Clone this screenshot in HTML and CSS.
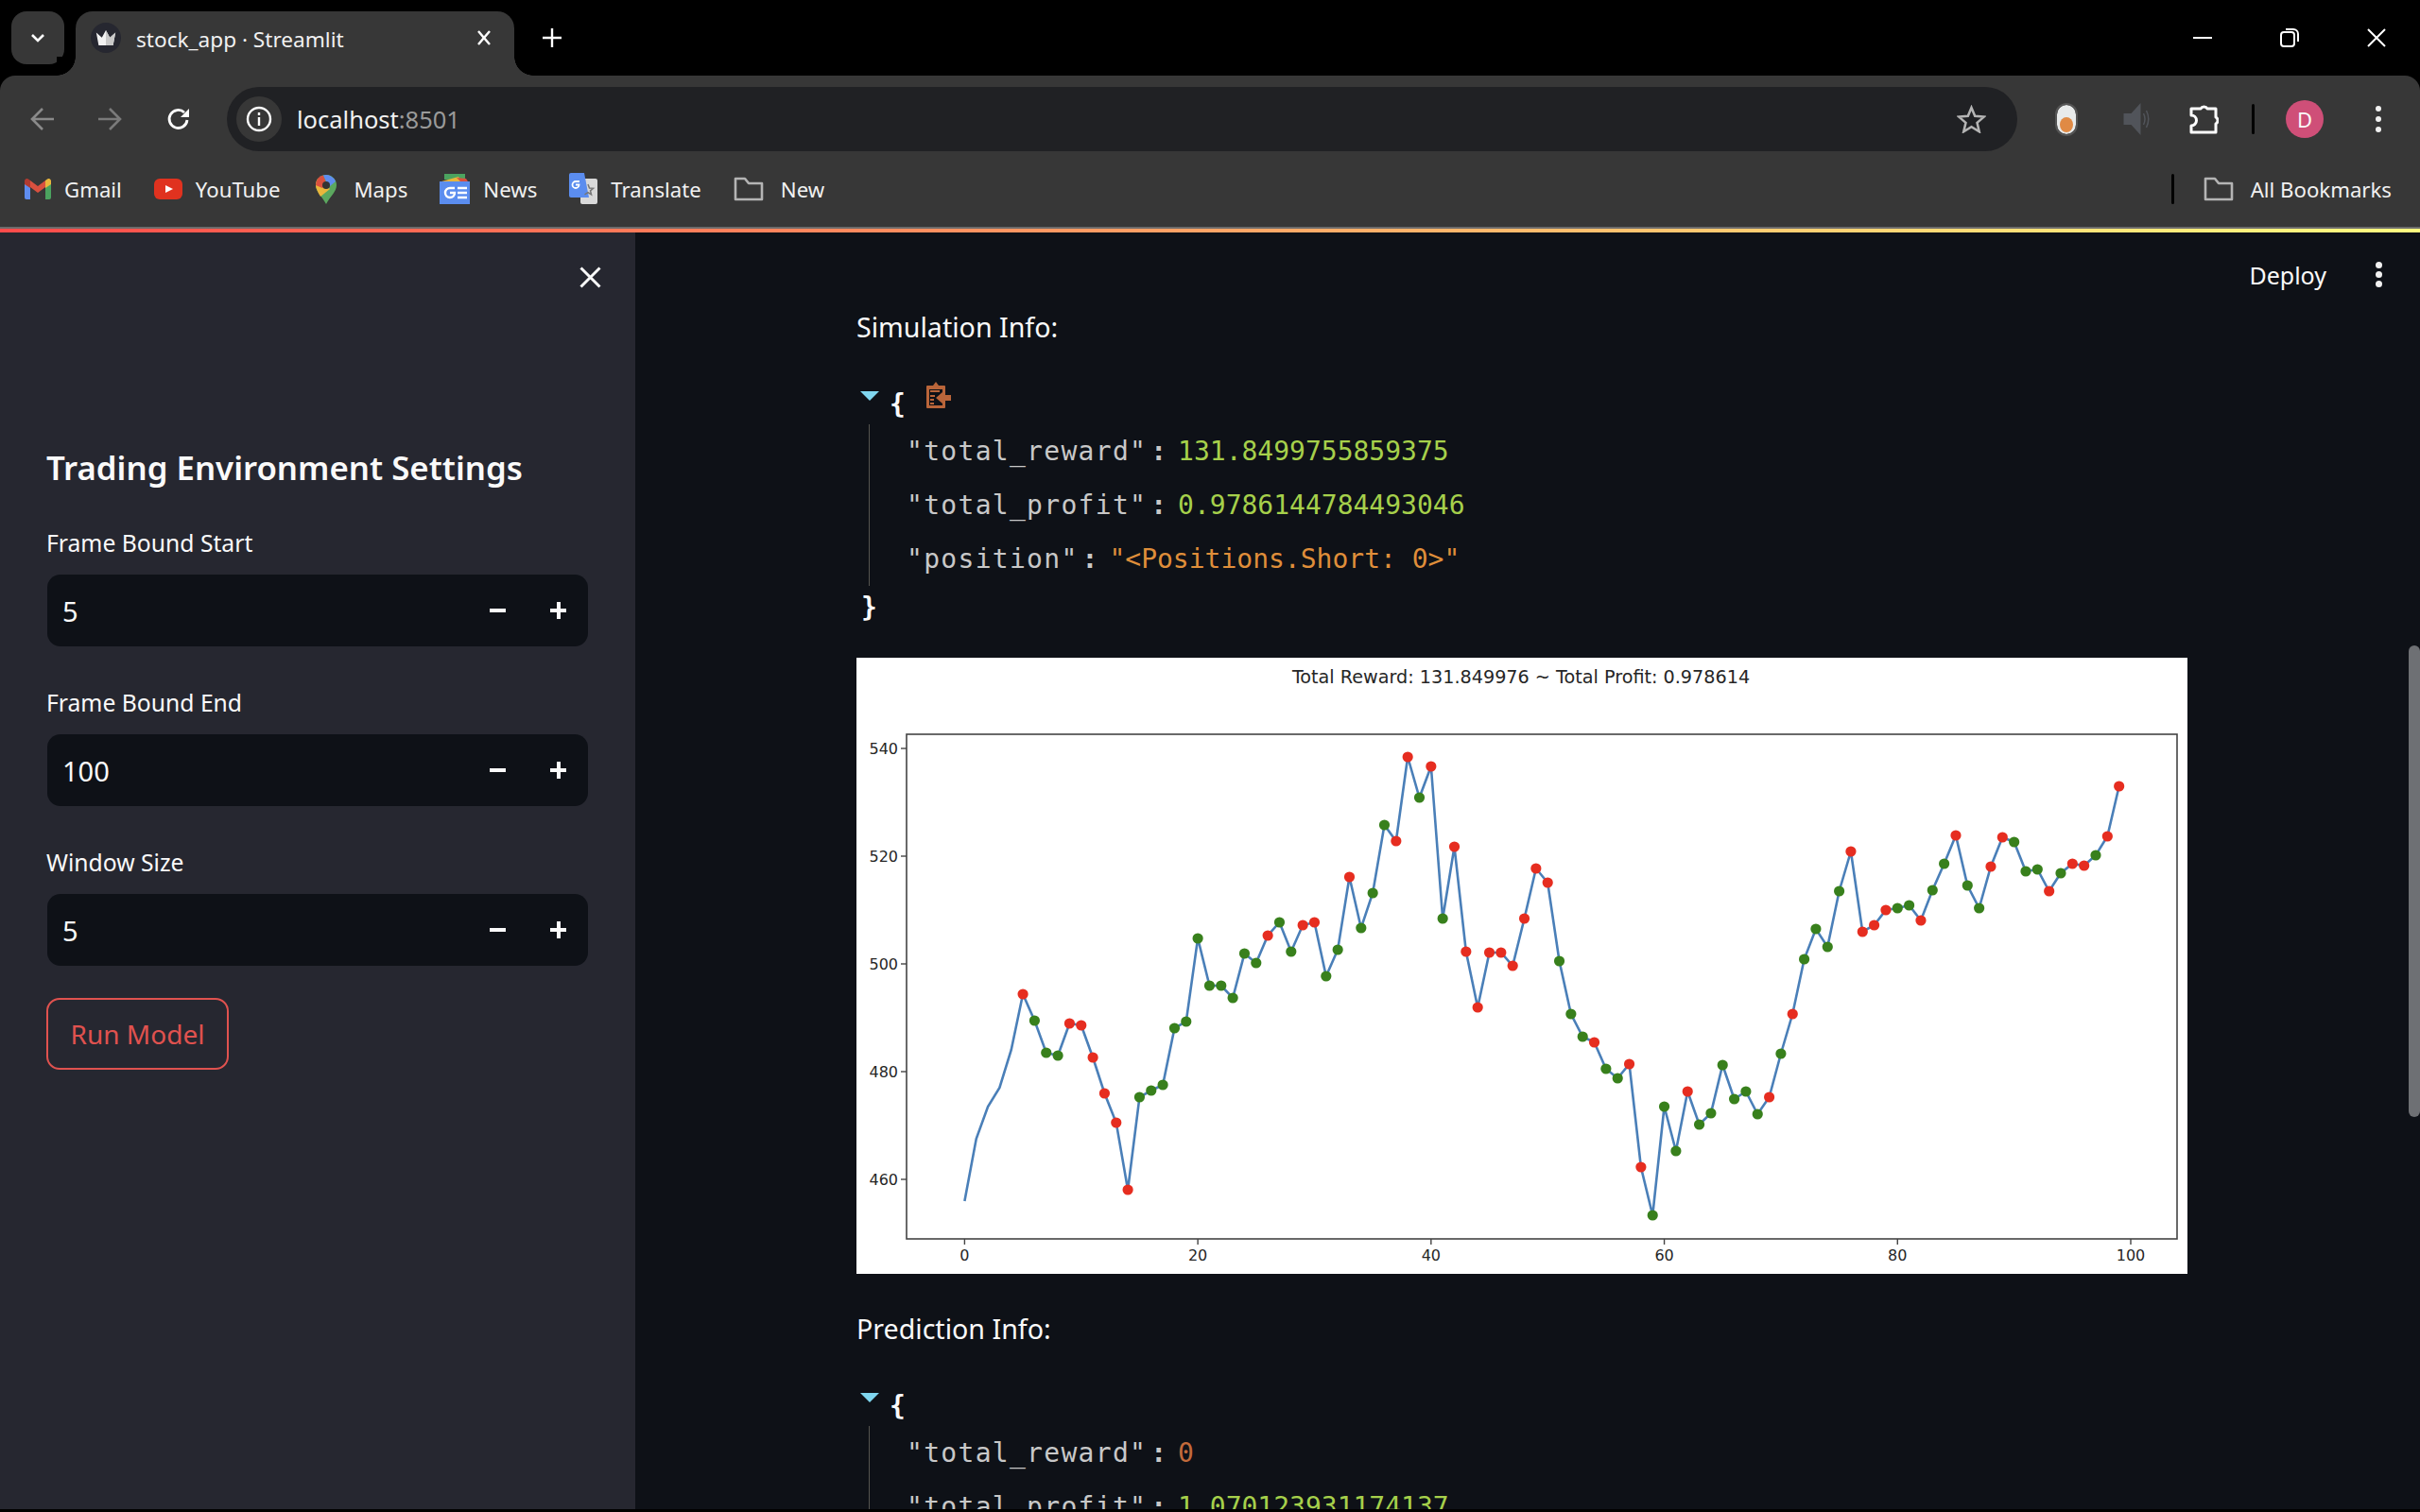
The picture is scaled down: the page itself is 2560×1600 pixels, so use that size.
FILE: index.html
```html
<!DOCTYPE html>
<html lang="en">
<head>
  <meta charset="UTF-8">
  <title>stock_app · Streamlit</title>
  <link rel="stylesheet" href="styles.css">
</head>
<body>
  <div class="browser">
    <div class="tabstrip">
      <div class="tab-menu">
        <svg width="20" height="20" viewBox="0 0 20 20"><path d="M4 7l6 6 6-6" fill="none" stroke="#fff" stroke-width="2.6"/></svg>
      </div>
      <div class="tab">
        <span class="favicon">
          <svg width="22" height="19" viewBox="0 0 26 22"><path d="M1 4l7 6 5-9 5 9 7-6-3 16H4z" fill="#f2f2f2"/><path d="M13 1l5 9 7-6-3 16H13z" fill="#c9c9c9"/></svg>
        </span>
        <span class="tab-title">stock_app · Streamlit</span>
        <svg width="16" height="16" viewBox="0 0 16 16"><path d="M2 1l12 14M14 1L2 15" stroke="#fff" stroke-width="2.4"/></svg>
      </div>
      <svg class="new-tab" width="20" height="20" viewBox="0 0 20 20"><path d="M10 0v20M0 10h20" stroke="#fff" stroke-width="2.4"/></svg>
      <div class="window-btns">
        <svg width="20" height="4" viewBox="0 0 20 4"><path d="M0 2h20" stroke="#fff" stroke-width="2"/></svg>
        <svg width="20" height="20" viewBox="0 0 20 20" fill="none" stroke="#fff" stroke-width="2"><rect x="1" y="4" width="14" height="15" rx="3"/><path d="M6 1h8a5 5 0 0 1 5 5v8"/></svg>
        <svg width="20" height="20" viewBox="0 0 20 20"><path d="M1 1l18 18M19 1L1 19" stroke="#fff" stroke-width="2"/></svg>
      </div>
    </div>

    <div class="toolbar">
      <svg class="nav-icon" width="26" height="24" viewBox="0 0 26 24" fill="none" stroke="#8a8a8a" stroke-width="2.6"><path d="M25 12H3M13 1L2 12l11 11"/></svg>
      <svg class="nav-icon" width="26" height="24" viewBox="0 0 26 24" fill="none" stroke="#7a7a7a" stroke-width="2.6"><path d="M1 12h22M13 1l11 11-11 11"/></svg>
      <svg class="nav-icon" width="26" height="26" viewBox="0 0 26 26" fill="none" stroke="#fff" stroke-width="2.8"><path d="M22 14a9.500 9.500 0 1 1-3-8"/><path d="M24 2v9h-9z" fill="#fff" stroke="none"/></svg>
      <div class="omnibox">
        <span class="site-info">
          <svg width="28" height="28" viewBox="0 0 28 28" fill="none" stroke="#fff" stroke-width="2.4"><circle cx="14" cy="14" r="12"/><path d="M14 12v9M14 7v3"/></svg>
        </span>
        <span class="url">localhost<span class="url-port">:8501</span></span>
        <svg width="31" height="30" viewBox="0 0 32 31"><path d="M16 3l3.800 9.200 9.900.800-7.500 6.500 2.300 9.700-8.500-5.200-8.500 5.200 2.300-9.700-7.500-6.500 9.900-.800z" fill="none" stroke="#b4b4b4" stroke-width="2.600"/></svg>
      </div>
      <span class="ext-toggle"><span class="ext-dot"></span></span>
      <svg class="ext-sound" width="29" height="36" viewBox="0 0 28 36"><path d="M1 12h8L19 1v34L9 24H1z" fill="#51545a"/><path d="M22 12c2 4 2 8 0 12M25 9c3 6 3 12 0 18" fill="none" stroke="#51545a" stroke-width="1.500"/></svg>
      <svg class="ext-puzzle" width="31" height="32" viewBox="0 0 31 32" fill="none" stroke="#fff" stroke-width="3" stroke-linejoin="round"><path d="M2 5h10a4 4 0 0 1 7 0h9v9a4 4 0 0 1 0 7v9H2v-7a5 5 0 0 0 0-11z"/></svg>
      <span class="divider tool-divider"></span>
      <span class="avatar">D</span>
      <span class="kebab"><i></i><i></i><i></i></span>
    </div>

    <div class="bookmarks">
      <a class="bm">
        <svg width="28" height="22" viewBox="0 0 28 22"><path d="M0 4v16a2 2 0 0 0 2 2h4V9z" fill="#5f8def"/><path d="M22 9v13h4a2 2 0 0 0 2-2V4z" fill="#4ba35f"/><path d="M6 9l8 6 8-6V2l-8 6-8-6z" fill="#d9503f"/><path d="M22 2l2-1.500a2.500 2.500 0 0 1 4 2V6l-6 4z" fill="#e9b63c"/><path d="M0 6V2.500a2.500 2.500 0 0 1 4-2l2 1.500v8z" fill="#b03a30"/></svg>
        Gmail
      </a>
      <a class="bm">
        <svg width="30" height="22" viewBox="0 0 30 22"><rect width="30" height="22" rx="6" fill="#e0321f"/><path d="M12 7l8 4-8 4z" fill="#fff"/></svg>
        YouTube
      </a>
      <a class="bm bm-maps">
        <svg width="22" height="31" viewBox="0 0 22 31"><path d="M11 31C7 23 0 18 0 11a11 11 0 0 1 22 0c0 7-7 12-11 20z" fill="#5ba85f"/><path d="M2 4l13 11-10 8C2 18 0 14 0 11q0-4 2-7z" fill="#e9b63c"/><path d="M2.500 3.500A11 11 0 0 1 8 .5L11 8l-4 6-7-3q0-4 2.500-7.500z" fill="#d9503f"/><path d="M8 .5A11 11 0 0 1 21 7l-6 5-4-5z" fill="#5f8def"/><circle cx="11" cy="11" r="4" fill="#333"/></svg>
        Maps
      </a>
      <a class="bm">
        <svg width="32" height="32" viewBox="0 0 32 32"><path d="M5 3V0h22v6H5z" fill="#4ba35f"/><path d="M2 8l18-5 3 5z" fill="#e9b63c"/><path d="M18 4l10 1 2 3H22z" fill="#d9503f"/><rect y="8" width="32" height="24" fill="#5b8def"/><path d="M16 15h-5a5 5 0 1 0 5 5h-5" fill="none" stroke="#fff" stroke-width="2.400"/><path d="M19 15h10M19 20h10M19 25h10" stroke="#fff" stroke-width="2.600"/></svg>
        News
      </a>
      <a class="bm">
        <svg width="30" height="34" viewBox="0 0 30 34"><rect x="12" y="6" width="18" height="27" rx="2" fill="#d9d9d9"/><path d="M2 0h14l5 26H2a2 2 0 0 1-2-2V2a2 2 0 0 1 2-2z" fill="#5b8def"/><path d="M20 12l1.500 4 4 .3-3 2.500 1 4-3.500-2.200-3.500 2.200" fill="none" stroke="#777" stroke-width="1.500"/><path d="M11 9H7a3.500 3.500 0 1 0 3.500 3.500H7" fill="none" stroke="#fff" stroke-width="1.800"/></svg>
        Translate
      </a>
      <a class="bm bm-folder">
        <svg width="32" height="26" viewBox="0 0 32 26"><path d="M2 2h10l4 5h14v17H2z" fill="none" stroke="#b4b4b4" stroke-width="2.600" stroke-linejoin="round"/></svg>
        New
      </a>
      <span class="bm-spacer"></span>
      <span class="divider bm-divider"></span>
      <a class="bm bm-folder">
        <svg width="32" height="26" viewBox="0 0 32 26"><path d="M2 2h10l4 5h14v17H2z" fill="none" stroke="#b4b4b4" stroke-width="2.600" stroke-linejoin="round"/></svg>
        All Bookmarks
      </a>
    </div>
    <div class="rainbow"></div>
  </div>

  <div class="app">
    <aside class="sidebar">
      <div class="sidebar-top">
        <svg width="23" height="23" viewBox="0 0 23 23"><path d="M1.500 1.500l20 20M21.500 1.500l-20 20" stroke="#fafafa" stroke-width="3"/></svg>
      </div>
      <h2 class="sidebar-title">Trading Environment Settings</h2>
      <div class="field">
        <label class="field-label">Frame Bound Start</label>
        <div class="num-input"><span class="num-value">5</span><span class="step minus"></span><span class="step plus"></span></div>
      </div>
      <div class="field">
        <label class="field-label">Frame Bound End</label>
        <div class="num-input"><span class="num-value">100</span><span class="step minus"></span><span class="step plus"></span></div>
      </div>
      <div class="field">
        <label class="field-label">Window Size</label>
        <div class="num-input"><span class="num-value">5</span><span class="step minus"></span><span class="step plus"></span></div>
      </div>
      <button class="run-btn">Run Model</button>
    </aside>

    <main class="main">
      <div class="main-header">
        <span class="deploy">Deploy</span>
        <span class="kebab kebab-lg"><i></i><i></i><i></i></span>
      </div>
      <div class="content">
        <p class="section-title">Simulation Info:</p>
        <div class="json">
          <div class="json-open">
            <span class="caret"></span><span class="brace">{</span>
            <svg class="copy" width="26" height="28" viewBox="0 0 26 28"><path d="M1 4h6l3-4 3 4h6a1 1 0 0 1 1 1v22a1 1 0 0 1-1 1H1a1 1 0 0 1-1-1V5a1 1 0 0 1 1-1z" fill="#b9653a"/><rect x="3" y="8" width="14" height="17" fill="#0e1117"/><path d="M4 10h10M4 15h5M4 19h4M4 23h4" stroke="#b9653a" stroke-width="2"/><path d="M10 17l7-6v3h9v6h-9v3z" fill="#b9653a"/></svg>
          </div>
          <div class="json-body">
            <div class="json-row"><span class="key">"total_reward"</span><span class="colon">:</span><span class="float">131.8499755859375</span></div>
            <div class="json-row"><span class="key">"total_profit"</span><span class="colon">:</span><span class="float">0.9786144784493046</span></div>
            <div class="json-row"><span class="key">"position"</span><span class="colon">:</span><span class="str">"&lt;Positions.Short: 0&gt;"</span></div>
          </div>
          <div class="json-close"><span class="brace">}</span></div>
        </div>

        <div class="chart">
          <svg id="chart" width="1408" height="652" viewBox="0 0 1408 652"></svg>
        </div>

        <p class="section-title section-second">Prediction Info:</p>
        <div class="json">
          <div class="json-open">
            <span class="caret"></span><span class="brace">{</span>
          </div>
          <div class="json-body">
            <div class="json-row"><span class="key">"total_reward"</span><span class="colon">:</span><span class="int">0</span></div>
            <div class="json-row"><span class="key">"total_profit"</span><span class="colon">:</span><span class="float">1.070123931174137</span></div>
          </div>
        </div>
      </div>
      <div class="scrollbar"></div>
    </main>
  </div>
  <div class="bottom-edge"></div>
  <script src="chart.js"></script>
</body>
</html>
```

FILE: styles.css
```css
* {
  box-sizing: border-box;
}
html, body {
  margin: 0;
  height: 100%;
}
body {
  width: 2560px;
  height: 1600px;
  overflow: hidden;
  background: #000;
  color: #fafafa;
  font-family: "Noto Sans", Arial, sans-serif;
  display: flex;
  flex-direction: column;
}

/* browser chrome */
.browser {
  flex: none;
  height: 246px;
  display: flex;
  flex-direction: column;
}
.tabstrip {
  height: 80px;
  padding: 12px 0 0 12px;
  display: flex;
  align-items: flex-start;
  background: #000;
}
.tab-menu {
  width: 56px;
  height: 56px;
  border-radius: 16px;
  background: #373737;
  display: flex;
  align-items: center;
  justify-content: center;
}
.tab {
  width: 464px;
  height: 68px;
  margin-left: 12px;
  padding: 0 24px 12px 16px;
  background: #373737;
  border-radius: 18px 18px 0 0;
  display: flex;
  align-items: center;
  position: relative;
}
.tab::before, .tab::after {
  content: "";
  position: absolute;
  bottom: 0;
  width: 20px;
  height: 20px;
}
.tab::before {
  left: -20px;
  background: radial-gradient(circle at 0 0, #000 19.500px, #373737 20px);
}
.tab::after {
  right: -20px;
  background: radial-gradient(circle at 100% 0, #000 19.500px, #373737 20px);
}
.favicon {
  width: 32px;
  height: 32px;
  border-radius: 50%;
  background: #262730;
  display: flex;
  align-items: center;
  justify-content: center;
  margin-right: 16px;
}
.tab-title {
  flex: 1;
  padding-top: 2px;
  font-size: 22.600px;
  color: #f1f1f1;
}
.new-tab {
  margin: 18px 0 0 30px;
}
.window-btns {
  margin-left: auto;
  height: 56px;
  padding-right: 36px;
  display: flex;
  align-items: center;
  gap: 72px;
}
.toolbar {
  height: 80px;
  background: #373737;
  border-radius: 16px 16px 0 0;
  padding: 12px 0 0 32px;
  display: flex;
  align-items: center;
}
.nav-icon {
  flex: none;
  margin-right: 45px;
}
.nav-icon:nth-child(2) {
  margin-right: 47px;
}
.nav-icon:nth-child(3) {
  margin-right: 38px;
}
.omnibox {
  flex: none;
  width: 1894px;
  height: 68px;
  margin-right: 42px;
  background: #202124;
  border-radius: 34px;
  display: flex;
  align-items: center;
  padding: 0 33px 0 10px;
}
.site-info {
  width: 48px;
  height: 48px;
  border-radius: 50%;
  background: #373737;
  display: flex;
  align-items: center;
  justify-content: center;
  margin-right: 16px;
}
.url {
  flex: 1;
  font-size: 25.500px;
  color: #f1f1f1;
}
.url-port {
  color: #9a9a9a;
}
.ext-toggle {
  flex: none;
  width: 20px;
  height: 31px;
  border-radius: 10px;
  background: #e8eaea;
  outline: 2px solid #555;
  display: flex;
  align-items: flex-end;
  justify-content: center;
  padding-bottom: 2px;
}
.ext-dot {
  width: 14px;
  height: 16px;
  border-radius: 50%;
  background: #e08a45;
}
.ext-sound {
  margin-left: 49px;
}
.ext-puzzle {
  margin-left: 42px;
}
.divider {
  flex: none;
  width: 3px;
  height: 32px;
  border-radius: 2px;
  background: #000;
}
.tool-divider {
  margin-left: 35px;
}
.bm-divider {
  margin-right: -3px;
}
.avatar {
  width: 40px;
  height: 40px;
  margin-left: 33px;
  border-radius: 50%;
  background: #cf4f78;
  font-size: 22px;
  display: flex;
  align-items: center;
  justify-content: center;
}
.kebab {
  display: flex;
  flex-direction: column;
  gap: 5px;
  align-items: center;
  margin-left: 55px;
}
.kebab i {
  width: 6px;
  height: 6px;
  border-radius: 50%;
  background: #f1f1f1;
}
.bookmarks {
  height: 80px;
  background: #373737;
  padding: 0 30px 0 26px;
  display: flex;
  align-items: center;
  gap: 34px;
}
.bm {
  display: flex;
  align-items: center;
  gap: 14px;
  font-size: 22.200px;
  color: #f1f1f1;
}
.bm-maps, .bm-folder {
  gap: 18px;
}
.bm-maps {
  margin-left: 4px;
}
.bm-spacer {
  flex: 1;
}
.rainbow {
  height: 6px;
  border-top: 2px solid #6b6b6b;
  background: linear-gradient(90deg, #ff4b4b, #fffd80);
  background-origin: border-box;
}

/* streamlit app */
.app {
  flex: 1;
  min-height: 0;
  display: flex;
}
.sidebar {
  flex: none;
  width: 672px;
  background: #262730;
  padding: 0 50px 0 49px;
}
.sidebar-top {
  height: 59px;
  margin-right: -14px;
  display: flex;
  justify-content: flex-end;
  align-items: flex-end;
}
.sidebar-title {
  margin: 166px 0 38px;
  font-size: 34.800px;
  line-height: 48px;
  font-weight: 600;
  color: #fafafa;
}
.field {
  margin-bottom: 42px;
}
.field-label {
  display: block;
  height: 36px;
  margin-bottom: 15px;
  font-size: 24.700px;
  line-height: 36px;
}
.num-input {
  height: 76px;
  margin-left: 1px;
  background: #0e1117;
  border-radius: 14px;
  display: flex;
  align-items: center;
  padding: 0 23px 0 16px;
}
.num-value {
  flex: 1;
  font-size: 29px;
}
.step {
  width: 17px;
  height: 18px;
  position: relative;
  margin-left: 47px;
}
.minus::before, .plus::before, .plus::after {
  content: "";
  position: absolute;
  background: #fafafa;
  left: 0;
  top: 7px;
  width: 17px;
  height: 4px;
}
.plus::after {
  left: 6.500px;
  top: 0;
  width: 4px;
  height: 18px;
}
.run-btn {
  display: block;
  width: 193px;
  height: 76px;
  margin-top: -8px;
  background: transparent;
  border: 2px solid #e0524f;
  border-radius: 14px;
  color: #e0524f;
  font-family: inherit;
  font-size: 28px;
  padding: 0;
}
.main {
  flex: 1;
  background: #0e1117;
  position: relative;
  min-width: 0;
  overflow: hidden;
}
.main-header {
  height: 63px;
  padding-right: 40px;
  display: flex;
  align-items: flex-end;
  justify-content: flex-end;
}
.deploy {
  font-size: 25px;
  line-height: 36px;
  color: #fafafa;
}
.kebab-lg {
  gap: 3px;
  margin-left: 52px;
  padding-bottom: 5px;
}
.kebab-lg i {
  width: 7px;
  height: 7px;
}
.content {
  padding: 17px 0 0 234px;
  width: 1642px;
}
.section-title {
  margin: 0;
  font-size: 28.600px;
  line-height: 40px;
  color: #fafafa;
}
.section-second {
  padding-top: 38px;
}
.json {
  font-family: "DejaVu Sans Mono", "Liberation Mono", monospace;
  font-size: 28px;
  margin-top: 38px;
}
.json-open {
  height: 45px;
  display: flex;
  align-items: flex-start;
}
.caret {
  width: 0;
  height: 0;
  margin: 10px 11px 0 4px;
  border-left: 10px solid transparent;
  border-right: 10px solid transparent;
  border-top: 10px solid #7fd6ef;
}
.brace {
  font-weight: 700;
  line-height: 38px;
  margin-top: 5px;
}
.copy {
  margin-left: 22px;
}
.json-body {
  margin-left: 13px;
  padding-left: 39px;
  border-left: 1px solid #55544f;
}
.json-row {
  height: 57px;
  display: flex;
  align-items: center;
  color: #c8c8c8;
}
.colon {
  margin: 0 12px 0 4px;
  font-weight: 700;
}
.key {
  letter-spacing: 1.300px;
}
.float {
  color: #a6d04b;
}
.str {
  color: #df8e3a;
}
.int {
  color: #c26a3b;
}
.json-close {
  height: 44px;
  padding-top: 4px;
  margin-left: 5px;
}
.json-close .brace {
  margin-top: 0;
  display: block;
}
.chart {
  margin-top: 32px;
  width: 1408px;
  height: 652px;
  background: #fff;
}
.chart svg {
  display: block;
}
.chart text {
  font-family: "DejaVu Sans", sans-serif;
  fill: #262626;
}
.chart .tick-label {
  font-size: 16px;
}
.chart .chart-title {
  font-size: 19.200px;
}
.scrollbar {
  position: absolute;
  right: 0;
  top: 437px;
  width: 12px;
  height: 499px;
  border-radius: 6px;
  background: #6e7074;
}
.bottom-edge {
  flex: none;
  height: 3px;
  background: #000;
}
```

FILE: chart.js
```js
// y positions of the closing price, one per tick, read off the plot
const ys = [
  575, 509, 475, 455, 415, 356, 384, 418, 421, 387,
  389, 423, 461, 492, 563, 465, 458, 452, 392, 385,
  297, 347, 347, 360, 313, 323, 294, 280, 311, 283,
  280, 337, 309, 232, 286, 249, 177, 194, 105, 148,
  115, 276, 200, 311, 370, 312, 312, 326, 276, 223,
  238, 321, 377, 401, 407, 435, 445, 430, 539, 590,
  475, 522, 459, 494, 482, 431, 467, 459, 483, 465,
  419, 377, 319, 287, 306, 247, 205, 290, 283, 267,
  265, 262, 278, 246, 218, 188, 241, 265, 221, 190,
  195, 226, 224, 247, 228, 218, 220, 209, 189, 136
]
const sells = [5, 9, 10, 11, 12, 13, 14, 26, 29, 30, 33, 37, 38, 40, 42, 43, 44, 45, 46, 47, 48, 49, 50, 54, 57, 58, 62, 69, 71, 76, 77, 78, 79, 82, 85, 88, 89, 93, 95, 96, 98, 99]

const NS = 'http://www.w3.org/2000/svg'
const svg = document.getElementById('chart')
const xOf = i => 114.4 + 12.336 * i

function add(name, attrs, text) {
  const el = document.createElementNS(NS, name)
  for (const k in attrs) el.setAttribute(k, attrs[k])
  if (text) el.textContent = text
  svg.appendChild(el)
}

add('text', { x: 703, y: 27, 'text-anchor': 'middle', class: 'chart-title' }, 'Total Reward: 131.849976 ~ Total Profit: 0.978614')
add('rect', { x: 53, y: 81, width: 1344, height: 534, fill: 'none', stroke: '#444', 'stroke-width': 1.6 })

for (let v = 0; v <= 100; v += 20) {
  const x = xOf(v)
  add('path', { d: `M${x} 615v6`, stroke: '#444', 'stroke-width': 1.4 })
  add('text', { x: x, y: 638, 'text-anchor': 'middle', class: 'tick-label' }, String(v))
}
[[540, 96], [520, 210], [500, 324], [480, 438], [460, 552]].forEach(([v, y]) => {
  add('path', { d: `M53 ${y}h-6`, stroke: '#444', 'stroke-width': 1.4 })
  add('text', { x: 44, y: y + 6, 'text-anchor': 'end', class: 'tick-label' }, String(v))
})

add('polyline', {
  points: ys.map((y, i) => xOf(i) + ',' + y).join(' '),
  fill: 'none', stroke: '#4a7fb8', 'stroke-width': 2.6
})
ys.forEach((y, i) => {
  if (i < 5) return
  add('circle', { cx: xOf(i), cy: y, r: 5.6, fill: sells.includes(i) ? '#e62d20' : '#38801c' })
})
```
